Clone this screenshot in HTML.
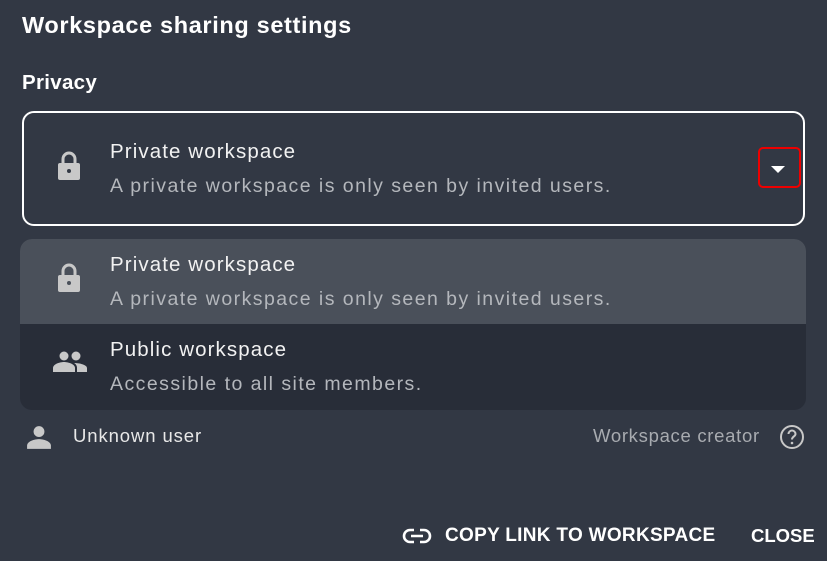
<!DOCTYPE html>
<html><head><style>
body{margin:0;width:827px;height:561px;background:#323844;font-family:"Liberation Sans",sans-serif;color:#fff;position:relative;overflow:hidden}
.a{position:absolute;white-space:nowrap}
.t{font-size:20.5px;color:#f2f2f2;letter-spacing:1.1px}
.d{font-size:19.5px;color:#b4b7bc;letter-spacing:1.45px}
</style></head><body>
<div class="a" style="left:22px;top:12px;font-size:23.5px;font-weight:bold;letter-spacing:0.65px">Workspace sharing settings</div>
<div class="a" style="left:22px;top:71px;font-size:20.5px;font-weight:bold;letter-spacing:0.3px">Privacy</div>
<div class="a" style="left:22px;top:111px;width:779px;height:111px;border:2px solid #fff;border-radius:12px"></div>
<svg class="a" style="left:56px;top:150px" width="26" height="30" viewBox="0 0 26 30"><path d="M7 13V9a6 6 0 0112 0v4" stroke="#c8c8c8" stroke-width="3" fill="none"/><rect x="2" y="13" width="22" height="17" rx="2" fill="#c8c8c8"/><circle cx="13" cy="21" r="2" fill="#323844"/></svg>
<div class="a t" style="left:110px;top:140px">Private workspace</div>
<div class="a d" style="left:110px;top:175px">A private workspace is only seen by invited users.</div>
<div class="a" style="left:758px;top:147px;width:39px;height:37px;border:2px solid #e00;border-radius:5px"></div>
<svg class="a" style="left:771px;top:166px" width="14" height="8"><path d="M0 0h14L7 7z" fill="#fff"/></svg>
<div class="a" style="left:20px;top:239px;width:786px;height:171px;border-radius:12px;overflow:hidden;background:#282d38">
<div style="height:85px;background:#4a505a"></div></div>
<svg class="a" style="left:56px;top:262px" width="26" height="30" viewBox="0 0 26 30"><path d="M7 13V9a6 6 0 0112 0v4" stroke="#c8c8c8" stroke-width="3" fill="none"/><rect x="2" y="13" width="22" height="17" rx="2" fill="#c8c8c8"/><circle cx="13" cy="21" r="2" fill="#4a505a"/></svg>
<div class="a t" style="left:110px;top:253px">Private workspace</div>
<div class="a d" style="left:110px;top:288px">A private workspace is only seen by invited users.</div>
<svg class="a" style="left:53px;top:351px" width="34" height="22" viewBox="0 0 34 22"><circle cx="11" cy="5" r="4.5" fill="#c8c8c8"/><circle cx="23" cy="5" r="4.5" fill="#c8c8c8"/><path d="M0 21v-4c0-4 7-6 11-6s11 2 11 6v4z" fill="#c8c8c8"/><path d="M24 21v-4c0-2-1-4-3-5 6 0 13 2 13 5v4z" fill="#c8c8c8"/></svg>
<div class="a t" style="left:110px;top:338px">Public workspace</div>
<div class="a d" style="left:110px;top:373px">Accessible to all site members.</div>
<svg class="a" style="left:26px;top:424px" width="26" height="26" viewBox="0 0 24 24"><circle cx="12" cy="7" r="5" fill="#c8c8c8"/><path d="M1 23v-3c0-4 7-6 11-6s11 2 11 6v3z" fill="#c8c8c8"/></svg>
<div class="a" style="left:73px;top:425px;font-size:18.5px;color:#e8e8e8;letter-spacing:0.9px">Unknown user</div>
<div class="a" style="left:593px;top:425px;font-size:18.5px;color:#a8abb0;letter-spacing:0.7px">Workspace creator</div>
<svg class="a" style="left:779px;top:424px" width="26" height="26" viewBox="0 0 26 26"><circle cx="13" cy="13" r="11" stroke="#c8c8c8" stroke-width="2" fill="none"/><path d="M9.5 10a3.5 3.5 0 117 0c0 2.5-3.5 2.5-3.5 5.5" stroke="#c8c8c8" stroke-width="2" fill="none"/><circle cx="13" cy="19" r="1.3" fill="#c8c8c8"/></svg>
<svg class="a" style="left:402px;top:528px" width="30" height="16" viewBox="0 0 30 16"><path d="M12 2H8a6 6 0 000 12h4M18 2h4a6 6 0 010 12h-4M9 8h12" stroke="#fff" stroke-width="2.6" fill="none"/></svg>
<div class="a" style="left:445px;top:525px;font-size:19px;font-weight:bold;letter-spacing:0.3px">COPY LINK TO WORKSPACE</div>
<div class="a" style="left:751px;top:525px;font-size:18.5px;font-weight:bold">CLOSE</div>
</body></html>
